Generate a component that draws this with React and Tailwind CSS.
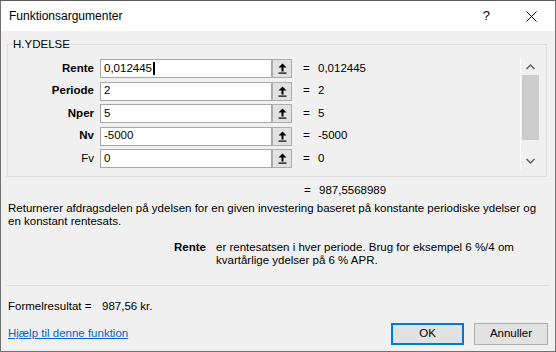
import React from 'react';

const args = [
    { name: 'Rente', value: '0,012445', result: '0,012445', bold: true, cursor: true },
    { name: 'Periode', value: '2', result: '2', bold: true },
    { name: 'Nper', value: '5', result: '5', bold: true },
    { name: 'Nv', value: '-5000', result: '-5000', bold: true },
    { name: 'Fv', value: '0', result: '0', bold: false },
];

const PickButton = () => (
    <div className="w-[20px] h-[19px] border border-[#adadad] bg-[#e1e1e1] flex items-center justify-center">
        <svg width="9" height="11" viewBox="0 0 9 11">
            <path d="M4.5 0.5 L8.5 4.5 L5.5 4.5 L5.5 8.5 L3.5 8.5 L3.5 4.5 L0.5 4.5 Z" fill="#000" />
            <rect x="0.5" y="9.5" width="8" height="1.2" fill="#000" />
        </svg>
    </div>
);

const App = () => {
    return (
        <div
            className="w-[556px] h-[352px] bg-[#f0f0f0] border border-t-[#5a5a5a] border-x-[#707070] border-b-[#707070] flex flex-col text-[11.5px] text-black overflow-hidden"
            style={{ fontFamily: '"Liberation Sans", Arial, sans-serif' }}
        >
            {/* Title bar */}
            <div className="h-[30px] bg-white flex items-center shrink-0">
                <span className="ml-[8px] text-[12px]">Funktionsargumenter</span>
                <span className="ml-auto text-[13px] mr-[36px]">?</span>
                <svg width="11" height="11" viewBox="0 0 11 11" className="mr-[18px]">
                    <path d="M0.5 0.5 L10.5 10.5 M10.5 0.5 L0.5 10.5" stroke="#000" strokeWidth="1" />
                </svg>
            </div>

            {/* Group */}
            <fieldset className="ml-[6px] mr-[8px] mt-[6px] h-[140px] border border-[#dcdcdc] px-0 pt-[8px] pb-0 shrink-0">
                <legend className="ml-[4px] px-[1px] leading-[14px]">H.YDELSE</legend>
                <div className="flex">
                    <div className="flex flex-col gap-[3.5px]">
                        {args.map((a) => (
                            <div key={a.name} className="flex items-center h-[19px]">
                                <span className={`w-[92px] text-right pr-[6px] ${a.bold ? 'font-bold' : ''}`}>{a.name}</span>
                                <div className="w-[172px] h-[19px] bg-white border border-[#a8a8a8] flex items-center pl-[3px]">
                                    <span>{a.value}</span>
                                    {a.cursor && <span className="w-[2px] h-[13px] bg-black ml-[1px]" />}
                                </div>
                                <PickButton />
                                <span className="ml-[11px] w-[15px]">=</span>
                                <span>{a.result}</span>
                            </div>
                        ))}
                    </div>
                    <div className="ml-auto mr-[7px] -mt-[1px] w-[19px] h-[111px] border-l border-white flex flex-col items-center">
                        <svg width="9" height="6" viewBox="0 0 9 6" className="mt-[6px] mb-[5px]">
                            <path d="M0.5 5 L4.5 1 L8.5 5" stroke="#606060" strokeWidth="1.5" fill="none" />
                        </svg>
                        <div className="w-[17px] h-[65px] bg-[#cdcdcd]" />
                        <svg width="9" height="6" viewBox="0 0 9 6" className="mt-auto mb-[5px]">
                            <path d="M0.5 1 L4.5 5 L8.5 1" stroke="#606060" strokeWidth="1.5" fill="none" />
                        </svg>
                    </div>
                </div>
            </fieldset>

            {/* Result */}
            <div className="flex mt-[6px] h-[15px] items-center">
                <span className="ml-[303px] w-[15px]">=</span>
                <span>987,5568989</span>
            </div>

            {/* Description */}
            <p className="ml-[7px] mt-[4px] leading-[13px] whitespace-nowrap">
                Returnerer afdragsdelen på ydelsen for en given investering baseret på konstante periodiske ydelser og
                <br />
                en konstant rentesats.
            </p>

            <div className="flex mt-[13px] leading-[13px]">
                <span className="w-[205px] text-right font-bold">Rente</span>
                <p className="ml-[10px] whitespace-nowrap">
                    er rentesatsen i hver periode. Brug for eksempel 6 %/4 om
                    <br />
                    kvartårlige ydelser på 6 % APR.
                </p>
            </div>

            {/* Separator */}
            <div className="mt-[18px] mx-[6px] h-px bg-[#dcdcdc]" />

            <div className="flex mt-[13px] h-[15px] items-center">
                <span className="ml-[7px] w-[94px]">Formelresultat =</span>
                <span>987,56 kr.</span>
            </div>

            <div className="flex items-center mt-[9px]">
                <a href="#" className="ml-[7px] text-[#0066cc] underline">Hjælp til denne funktion</a>
                <button className="ml-auto w-[73px] h-[22px] border-2 border-[#0078d7] bg-[#e1e1e1]">OK</button>
                <button className="ml-[10px] mr-[7px] w-[74px] h-[22px] border border-[#adadad] bg-[#e1e1e1]">Annuller</button>
            </div>
        </div>
    );
};

export default App;
